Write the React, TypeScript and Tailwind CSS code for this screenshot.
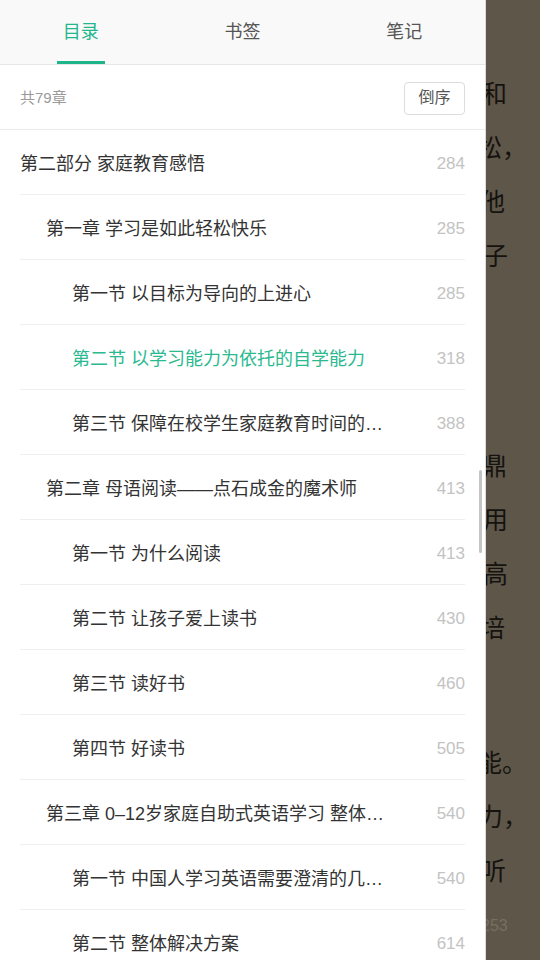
import React from 'react'

type TocItem = {
  id: string
  title: string
  page: number
  level: 0 | 1 | 2
  isActive?: boolean
}

const tocItems: TocItem[] = [
  { id: 'p2', title: '第二部分 家庭教育感悟', page: 284, level: 0 },
  { id: 'c1', title: '第一章 学习是如此轻松快乐', page: 285, level: 1 },
  { id: 'c1s1', title: '第一节 以目标为导向的上进心', page: 285, level: 2 },
  { id: 'c1s2', title: '第二节 以学习能力为依托的自学能力', page: 318, level: 2, isActive: true },
  { id: 'c1s3', title: '第三节 保障在校学生家庭教育时间的策略', page: 388, level: 2 },
  { id: 'c2', title: '第二章 母语阅读——点石成金的魔术师', page: 413, level: 1 },
  { id: 'c2s1', title: '第一节 为什么阅读', page: 413, level: 2 },
  { id: 'c2s2', title: '第二节 让孩子爱上读书', page: 430, level: 2 },
  { id: 'c2s3', title: '第三节 读好书', page: 460, level: 2 },
  { id: 'c2s4', title: '第四节 好读书', page: 505, level: 2 },
  { id: 'c3', title: '第三章 0–12岁家庭自助式英语学习 整体解决方案', page: 540, level: 1 },
  { id: 'c3s1', title: '第一节 中国人学习英语需要澄清的几个问题', page: 540, level: 2 },
  { id: 'c3s2', title: '第二节 整体解决方案', page: 614, level: 2 },
]

const indentClass = {
  0: 'pl-0',
  1: 'pl-[26px]',
  2: 'pl-[52px]',
}

// the page behind the drawer: only the line ends stick out
const pageGroups = [
  {
    className: 'pt-[65px]',
    lines: [
      { text: '和', className: 'pl-[482px]' },
      { text: '松，', className: 'pl-[477px]' },
      { text: '他', className: 'pl-[480px]' },
      { text: '子', className: 'pl-[483px]' },
    ],
  },
  {
    className: 'mt-[156px]',
    lines: [
      { text: '鼎', className: 'pl-[482px]' },
      { text: '用', className: 'pl-[483px]' },
      { text: '高', className: 'pl-[483px]' },
      { text: '培', className: 'pl-[480px]' },
    ],
  },
  {
    className: 'mt-[81px]',
    lines: [
      { text: '能。', className: 'pl-[477px]' },
      { text: '力，', className: 'pl-[478px]' },
      { text: '听', className: 'pl-[481px]' },
    ],
  },
]

const tabs = [
  { id: 'toc', name: '目录', isSelected: true },
  { id: 'bookmarks', name: '书签', isSelected: false },
  { id: 'notes', name: '笔记', isSelected: false },
]

function ReaderPage() {
  return (
    <div className="h-full w-full bg-[#5e5649] text-[#15130f] text-[25px] font-['Noto_Sans_CJK_SC',sans-serif]">
      {pageGroups.map((group, i) => (
        <div key={i} className={group.className}>
          {group.lines.map((line, j) => (
            <div key={j} className={`h-[54px] leading-[54px] whitespace-nowrap ${line.className}`}>
              {line.text}
            </div>
          ))}
        </div>
      ))}
      <div className="mt-[20px] pl-[481px] h-[20px] leading-[20px] text-[16px] text-[#776f62] font-['Liberation_Sans',sans-serif]">
        253
      </div>
    </div>
  )
}

function Tabs() {
  return (
    <div className="flex h-[65px] flex-none bg-[#f9f9f9] border-b border-[#e6e6e6]">
      {tabs.map((tab) => (
        <div key={tab.id} className="flex flex-1 flex-col items-center">
          <div
            className={`flex flex-1 items-center pt-[3px] text-[18px] ${
              tab.isSelected ? 'text-[#22b68c]' : 'text-[#555555]'
            }`}
          >
            {tab.name}
          </div>
          <div className={`h-[3px] w-[48px] ${tab.isSelected ? 'bg-[#1fb58b]' : 'bg-transparent'}`} />
        </div>
      ))}
    </div>
  )
}

function TocRow({ item }: { item: TocItem }) {
  return (
    <div className="flex h-[65px] flex-none items-center border-b border-[#efefef] pt-[4px]">
      <div
        className={`min-w-0 flex-1 truncate text-[18px] ${indentClass[item.level]} ${
          item.isActive ? 'text-[#2bb98f]' : 'text-[#333333]'
        }`}
      >
        {item.title}
      </div>
      <div className="w-[74px] flex-none text-right text-[17px] text-[#c3c3c3]">{item.page}</div>
    </div>
  )
}

function TocDrawer() {
  return (
    <div className="absolute left-0 top-0 bottom-0 flex w-[486px] flex-col overflow-hidden border-r border-[#dcdcdc] bg-white font-['Liberation_Sans','Noto_Sans_CJK_SC',sans-serif]">
      <Tabs />
      <div className="flex h-[65px] flex-none items-center justify-between border-b border-[#ececec] px-[20px] pt-[2px]">
        <span className="text-[15px] text-[#9a9a9a]">共79章</span>
        <button className="flex h-[33px] w-[61px] items-center justify-center rounded-[4px] border border-[#dddddd] bg-white text-[16px] text-[#555555]">
          倒序
        </button>
      </div>
      <div className="flex flex-col px-[20px]">
        {tocItems.map((item) => (
          <TocRow key={item.id} item={item} />
        ))}
      </div>
      {/* scroll indicator */}
      <div className="absolute left-[479px] top-[470px] h-[83px] w-[3px] rounded-full bg-[#c4c4c4]" />
    </div>
  )
}

export default function App() {
  return (
    <div className="relative h-[960px] w-[540px] overflow-hidden">
      <ReaderPage />
      <TocDrawer />
    </div>
  )
}
